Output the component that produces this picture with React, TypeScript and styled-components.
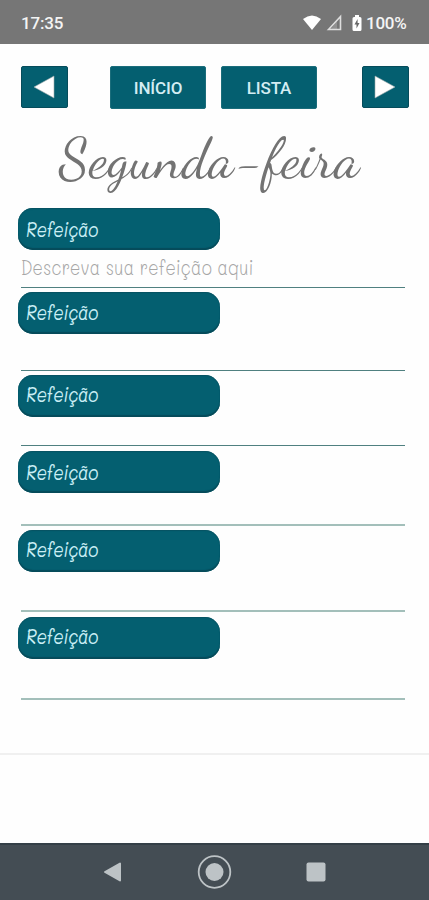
import React from "react";
import styled, { createGlobalStyle } from "styled-components";

const Global = createGlobalStyle`
  * { box-sizing: border-box; }
  body { margin: 0; background: #fefefe; }
`;
const Screen = styled.div`
  width: 429px;
  height: 900px;
  display: flex;
  flex-direction: column;
  overflow: hidden;
  background: #fefefe;
`;
const StatusBar = styled.header`
  height: 44px;
  flex: none;
  display: flex;
  align-items: center;
  justify-content: space-between;
  padding: 2px 22px 0 21px;
  background: #767676;
  color: #f4f4f4;
  font: 500 17px/20px Roboto, sans-serif;
`;
const Clock = styled.span`
  letter-spacing: -0.2px;
`;
const StatusIcons = styled.div`
  display: flex;
  align-items: center;
`;
const Percent = styled.span`
  width: 41px;
  margin-left: 4px;
  letter-spacing: -0.25px;
  white-space: nowrap;
`;
const Toolbar = styled.nav`
  height: 64px;
  flex: none;
  display: flex;
  align-items: flex-start;
  padding: 22px 20px 0 21px;
`;
const Button = styled.button<{ $arrow?: boolean; $gap?: number }>`
  width: ${(p) => (p.$arrow ? 47 : 96)}px;
  height: ${(p) => (p.$arrow ? 42 : 43)}px;
  margin: 0 0 0 ${(p) => p.$gap ?? 0}px;
  padding: 0;
  border: 1px solid ${(p) => (p.$arrow ? "#064c5b" : "#1b6d7b")};
  border-radius: 2px;
  display: flex;
  align-items: center;
  justify-content: center;
  background: #045f70;
  color: #d3edf3;
  font: 500 17px/20px Roboto, sans-serif;
  letter-spacing: -0.15px;
`;
const Title = styled.h1`
  height: 100px;
  flex: none;
  margin: 0;
  padding-left: 59px;
  color: #737373;
  font: 400 56px/102px "Dancing Script", "Liberation Serif", cursive;
  letter-spacing: 0.45px;
  white-space: nowrap;
`;
const Meals = styled.main`
  height: 547px;
  flex: none;
  display: flex;
  flex-direction: column;
  border-bottom: 2px solid #f0f0f0;
`;
const Meal = styled.section<{ $height: number }>`
  height: ${(p) => p.$height}px;
  flex: none;
  padding-left: 18px;
`;
const MealLabel = styled.div<{ $raise: number }>`
  width: 202px;
  height: 42px;
  padding: ${(p) => 8 - p.$raise}px 8px 0;
  border-radius: 15px;
  background: #045f70;
  box-shadow: inset 0 -2px 1px #064b5a, inset 0 1px 1px #075362;
  color: #c9eef5;
  font: italic 400 17px/24px Mali, "Patrick Hand", Lato, sans-serif;
  letter-spacing: -0.3px;
`;
const TallText = styled.span`
  display: inline-block;
  transform: scaleY(1.22);
`;
const MealField = styled.div<{ $height: number; $soft?: boolean }>`
  width: 384px;
  height: ${(p) => p.$height}px;
  margin-left: 3px;
  padding-top: 5px;
  border-bottom: ${(p) => (p.$soft ? "2px solid #a3bfba" : "1px solid #4f8080")};
  color: #a6a6a6;
  font: 300 17px/25px Mali, "Patrick Hand", Lato, sans-serif;
  letter-spacing: 0.25px;
  white-space: nowrap;
`;
const SystemBar = styled.footer`
  height: 57px;
  margin-top: auto;
  flex: none;
  padding: 0 103px;
  border-top: 2px solid #343f47;
  background: #444d54;
  display: flex;
  align-items: center;
  justify-content: space-between;
`;

const meals = [
  { height: 84, field: 38, raise: 0, soft: false, text: "Descreva sua refeição aqui" },
  { height: 83, field: 37, raise: 1, soft: false, text: "" },
  { height: 76, field: 29, raise: 2, soft: false, text: "" },
  { height: 79, field: 33, raise: 0, soft: true, text: "" },
  { height: 87, field: 40, raise: 2, soft: true, text: "" },
  { height: 84, field: 41, raise: 2, soft: true, text: "" },
];

const Arrow = ({ right = false }: { right?: boolean }) => (
  <svg width="24" height="26" viewBox="0 0 24 26" aria-hidden="true">
    <path d={right ? "M1 2 21 13 1 24Z" : "M21 2 1 13 21 24Z"} fill="#fff" stroke="#9ca8a9" strokeWidth=".6" />
  </svg>
);

export default function App() {
  return (
    <Screen>
      <Global />
      <StatusBar>
        <Clock>17:35</Clock>
        <StatusIcons>
          <svg width="59" height="18" viewBox="0 0 59 18" aria-hidden="true">
            <path d="M0 5Q9-2 18 5L9 16Z" fill="#fff" />
            <path d="M25.5 15.500 37.500 2.500V15.500Z" fill="none" stroke="#dedede" strokeWidth="1.600" />
            <path d="M34 7V15H28Z" fill="#dedede" fillOpacity=".25" />
            <path d="M52 1h4v2h1q1.500 0 1.500 1.500v11q0 1.500-1.500 1.500h-6q-1.500 0-1.500-1.500v-11q0-1.500 1.500-1.500h1Z" fill="#fff" />
            <path d="M54.600 5 51.500 10.500h2v4l3-5.500h-1.900Z" fill="#686868" />
          </svg>
          <Percent>100%</Percent>
        </StatusIcons>
      </StatusBar>
      <Toolbar>
        <Button $arrow aria-label="Anterior"><Arrow /></Button>
        <Button $gap={42}>INÍCIO</Button>
        <Button $gap={15}>LISTA</Button>
        <Button $arrow $gap={45} aria-label="Próximo"><Arrow right /></Button>
      </Toolbar>
      <Title>Segunda-feira</Title>
      <Meals>
        {meals.map((meal, i) => (
          <Meal key={i} $height={meal.height}>
            <MealLabel $raise={meal.raise}><TallText>Refeição</TallText></MealLabel>
            <MealField $height={meal.field} $soft={meal.soft}>
              {meal.text && <TallText>{meal.text}</TallText>}
            </MealField>
          </Meal>
        ))}
      </Meals>
      <SystemBar>
        <svg width="19" height="22" viewBox="0 0 19 22" aria-hidden="true">
          <path d="M17 1.500V18.500L2 10Z" fill="#bdc3c6" stroke="#bdc3c6" strokeWidth="2" strokeLinejoin="round" />
        </svg>
        <svg width="36" height="36" viewBox="0 0 36 36" aria-hidden="true">
          <circle cx="18.500" cy="17" r="15.800" fill="none" stroke="#bdc3c6" strokeWidth="1.800" />
          <circle cx="18.500" cy="17" r="9" fill="#bdc3c6" />
        </svg>
        <svg width="20" height="22" viewBox="0 0 20 22" aria-hidden="true">
          <rect x=".5" y=".5" width="19" height="19" rx="2" fill="#bdc3c6" />
        </svg>
      </SystemBar>
    </Screen>
  );
}
